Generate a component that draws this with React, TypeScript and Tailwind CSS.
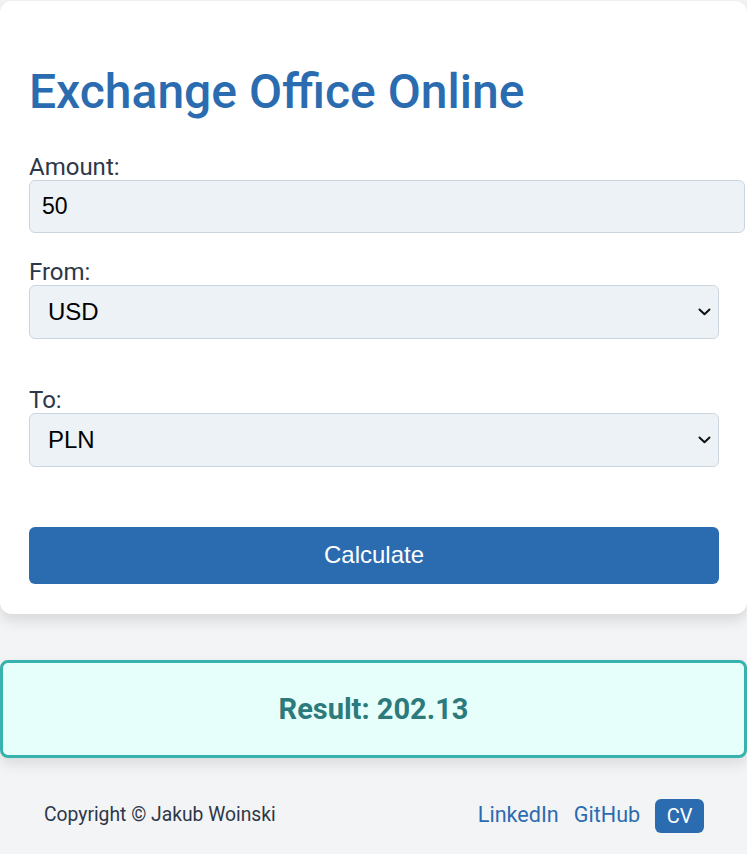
import React, { useState } from 'react';

const Chevron = () => (
  <svg
    className="pointer-events-none absolute right-[8px] top-1/2 -translate-y-1/2"
    width="13"
    height="8"
    viewBox="0 0 13 8"
    fill="none"
  >
    <path d="M1.5 1.5 L6.5 6.2 L11.5 1.5" stroke="#111" strokeWidth="2" strokeLinecap="round" strokeLinejoin="round" />
  </svg>
);

const App: React.FC = () => {
  const [amount, setAmount] = useState('50');
  const [from, setFrom] = useState('USD');
  const [to, setTo] = useState('PLN');

  return (
    <div className="min-h-screen bg-[#f3f4f6] font-['Roboto',sans-serif] overflow-hidden pt-px">
      {/* Converter card */}
      <div className="bg-white rounded-xl shadow-[0_6px_14px_rgba(0,0,0,0.12)] pt-[62px] pb-[30px] pl-[29px] pr-[28px]">
        <h1 className="text-[48px] leading-[1.2] font-medium text-[#2b6cb0]">Exchange Office Online</h1>

        <label className="block mt-[33px] text-[24px] leading-[26px] text-[#2d3748]">Amount:</label>
        <input
          type="number"
          value={amount}
          onChange={(e) => setAmount(e.target.value)}
          className="block w-[716px] h-[53px] px-[12px] bg-[#edf2f7] border border-[#cbd5e0] rounded-md font-['Liberation_Sans',sans-serif] text-[23px] text-black outline-none"
        />

        <label className="block mt-[26px] text-[24px] leading-[26px] text-[#2d3748]">From:</label>
        <div className="relative">
          <select
            value={from}
            onChange={(e) => setFrom(e.target.value)}
            className="block w-full h-[54px] pl-[18px] pr-[30px] appearance-none bg-[#edf2f7] border border-[#cbd5e0] rounded-md font-['Liberation_Sans',sans-serif] text-[24px] text-black outline-none"
          >
            <option>USD</option>
            <option>EUR</option>
            <option>PLN</option>
          </select>
          <Chevron />
        </div>

        <label className="block mt-[48px] text-[24px] leading-[26px] text-[#2d3748]">To:</label>
        <div className="relative">
          <select
            value={to}
            onChange={(e) => setTo(e.target.value)}
            className="block w-full h-[54px] pl-[18px] pr-[30px] appearance-none bg-[#edf2f7] border border-[#cbd5e0] rounded-md font-['Liberation_Sans',sans-serif] text-[24px] text-black outline-none"
          >
            <option>PLN</option>
            <option>USD</option>
            <option>EUR</option>
          </select>
          <Chevron />
        </div>

        <button className="block w-full h-[57px] mt-[60px] bg-[#2b6cb0] rounded-md text-white font-['Liberation_Sans',sans-serif] text-[24px]">
          Calculate
        </button>
      </div>

      {/* Result */}
      <div className="mt-[46px] h-[98px] flex items-center justify-center pt-[3px] bg-[#e6fffa] border-[3px] border-[#38b2ac] rounded-lg shadow-[0_6px_14px_rgba(0,0,0,0.1)]">
        <p className="text-[29px] font-bold text-[#2c7a7b]">Result: 202.13</p>
      </div>

      {/* Footer */}
      <footer className="flex items-center justify-between pl-[44px] pr-[43px] pt-[41px]">
        <span className="text-[19.3px] text-[#2d3748]">Copyright © Jakub Woinski</span>
        <div className="flex items-center gap-[15px]">
          <a href="#" className="text-[21.6px] text-[#2b6cb0]">LinkedIn</a>
          <a href="#" className="text-[21.6px] text-[#2b6cb0]">GitHub</a>
          <a href="#" className="h-[34px] px-[11.5px] flex items-center bg-[#2b6cb0] rounded-md text-white text-[20px]">CV</a>
        </div>
      </footer>
    </div>
  );
};

export default App;
